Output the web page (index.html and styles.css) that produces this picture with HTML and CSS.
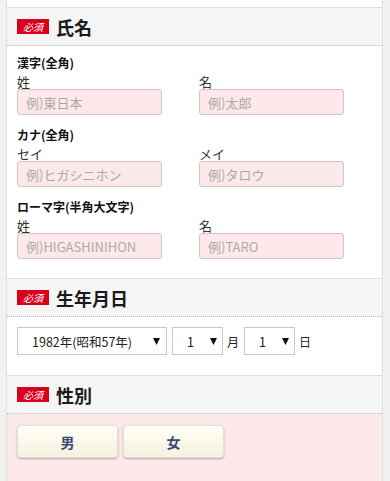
FILE: index.html
```html
<!DOCTYPE html>
<html lang="ja">
<head>
<meta charset="utf-8">
<link rel="stylesheet" href="styles.css">
</head>
<body>
<div class="page">
  <div class="prev"></div>

  <section class="sec">
    <div class="sec-head"><span class="badge">必須</span><h2 class="sec-title">氏名</h2></div>
    <div class="sec-body">
      <div class="group">
        <div class="group-title">漢字(全角)</div>
        <div class="cols">
          <div class="field"><label class="flabel">姓</label><input class="tin" type="text" placeholder="例)東日本"></div>
          <div class="field"><label class="flabel">名</label><input class="tin" type="text" placeholder="例)太郎"></div>
        </div>
      </div>
      <div class="group">
        <div class="group-title">カナ(全角)</div>
        <div class="cols">
          <div class="field"><label class="flabel">セイ</label><input class="tin" type="text" placeholder="例)ヒガシニホン"></div>
          <div class="field"><label class="flabel">メイ</label><input class="tin" type="text" placeholder="例)タロウ"></div>
        </div>
      </div>
      <div class="group">
        <div class="group-title">ローマ字(半角大文字)</div>
        <div class="cols">
          <div class="field"><label class="flabel">姓</label><input class="tin" type="text" placeholder="例)HIGASHINIHON"></div>
          <div class="field"><label class="flabel">名</label><input class="tin" type="text" placeholder="例)TARO"></div>
        </div>
      </div>
    </div>
  </section>

  <section class="sec">
    <div class="sec-head"><span class="badge">必須</span><h2 class="sec-title">生年月日</h2></div>
    <div class="sec-body birth">
      <div class="sel-row">
        <select class="sel sel-year"><option>1982年(昭和57年)</option></select>
        <select class="sel sel-small"><option>1</option></select>
        <span class="unit">月</span>
        <select class="sel sel-small"><option>1</option></select>
        <span class="unit">日</span>
      </div>
    </div>
  </section>

  <section class="sec">
    <div class="sec-head"><span class="badge">必須</span><h2 class="sec-title">性別</h2></div>
    <div class="sec-body gender">
      <div class="btn-row">
        <button class="gbtn" type="button">男</button>
        <button class="gbtn" type="button">女</button>
      </div>
    </div>
  </section>
</div>
</body>
</html>
```

FILE: styles.css
```css
* { box-sizing: border-box; }
html, body { margin: 0; padding: 0; }
body {
  background: #f1f1f1;
  font-family: "Noto Sans CJK JP", "Noto Sans", "Liberation Sans", sans-serif;
  color: #222;
  height: 481px;
  overflow: hidden;
}
.page {
  margin: 0 7px 0 6px;
}
.prev {
  height: 8px;
  background: #fff;
  border: 1px solid #dedede;
  border-top: none;
}
.sec {
  background: #fff;
  border: 1px solid #dedede;
  border-top: none;
}
.sec-head {
  height: 38px;
  background: #f5f5f5;
  border-bottom: 1px dotted #b8b8b8;
  display: flex;
  align-items: center;
  padding-left: 10px;
  gap: 7px;
}
.badge {
  display: inline-flex;
  align-items: center;
  justify-content: center;
  width: 32px;
  height: 15px;
  background: #d9001c;
  color: #fff;
  font-size: 10px;
  line-height: 15px;
  font-style: italic;
}
.sec-title {
  margin: 0;
  font-size: 18px;
  font-weight: bold;
  line-height: 22px;
  color: #1a1a1a;
}
.sec-body {
  padding: 9px 10px 7px;
}
.group {
  margin-bottom: 12px;
}
.group-title {
  font-size: 12px;
  font-weight: bold;
  line-height: 16px;
  color: #111;
}
.cols {
  display: grid;
  grid-template-columns: 182px 182px;
  margin-top: 4px;
}
.field {
  display: flex;
  flex-direction: column;
}
.flabel {
  font-size: 13px;
  line-height: 14px;
  color: #333;
}
.tin {
  width: 145px;
  height: 26px;
  margin: 0;
  padding: 0 8px;
  border: 1px solid #cfc6c6;
  border-radius: 3px;
  background: #fde9e9;
  font-family: inherit;
  font-size: 13px;
  color: #333;
  outline: none;
}
.tin::placeholder { color: #b0a8a8; }

.birth {
  padding: 10px 10px 20px;
}
.sel-row {
  display: flex;
  align-items: center;
  height: 28px;
}
.sel {
  -webkit-appearance: none;
  appearance: none;
  height: 28px;
  margin: 0;
  border: 1px solid #c8c8c8;
  border-radius: 0;
  background: #fff url("data:image/svg+xml,%3Csvg xmlns='http://www.w3.org/2000/svg' width='7' height='7'%3E%3Cpath d='M0 0H7L3.5 7Z' fill='%23111'/%3E%3C/svg%3E") no-repeat;
  font-family: inherit;
  font-size: 12.5px;
  color: #222;
  padding: 0 0 0 14px;
}
.sel-year {
  width: 150px;
  background-position: right 6px center;
}
.sel-small {
  width: 51px;
  margin-left: 5px;
  background-position: right 5px center;
}
.unit {
  font-size: 12px;
  margin-left: 4px;
  color: #222;
}

.gender {
  background: #fde9e9;
  padding: 11px 10px 30px;
}
.btn-row {
  display: flex;
  gap: 5px;
}
.gbtn {
  width: 101px;
  height: 33px;
  margin: 0;
  border: 1px solid #e2e0d2;
  border-radius: 4px;
  background: linear-gradient(#fffff6, #f3f1df);
  box-shadow: 0 1px 2px rgba(0,0,0,0.3);
  font-family: inherit;
  font-size: 14px;
  font-weight: bold;
  color: #3a4876;
}
```
